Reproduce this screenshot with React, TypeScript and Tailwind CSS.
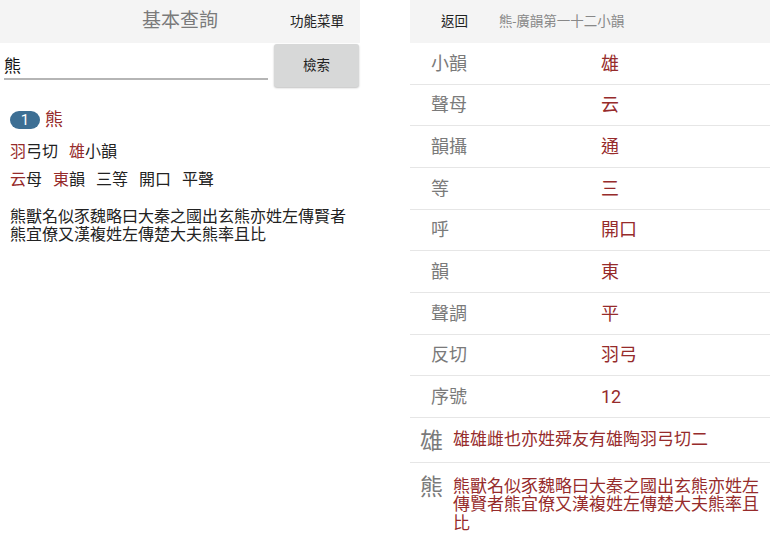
import React from "react";

const rows: [string, string][] = [
  ["小韻", "雄"],
  ["聲母", "云"],
  ["韻攝", "通"],
  ["等", "三"],
  ["呼", "開口"],
  ["韻", "東"],
  ["聲調", "平"],
  ["反切", "羽弓"],
  ["序號", "12"],
];

const red = "text-[#962b2b]";

export default function App() {
  return (
    <div className="flex h-[553px] w-[770px] bg-white font-['Roboto','Noto_Sans_CJK_TC',sans-serif]">
      {/* left: basic search */}
      <div className="w-[360px]">
        <div className="relative flex h-[43px] items-center bg-[#f4f4f4]">
          <div className="w-full text-center text-[19px] text-[#7a7a7a]">基本查詢</div>
          <div className="absolute left-[290px] text-[13.5px] text-[#222]">功能菜單</div>
        </div>
        <div className="flex h-[45px] items-start">
          <div className="ml-[4px] mt-[12px] w-[264px] border-b-2 border-[#b5b5b5] pb-[1px] text-[17px] leading-[22px] text-[#111]">
            熊
          </div>
          <button className="ml-[6px] mt-[1px] h-[43px] w-[85px] rounded-[3px] bg-[#d7d8d8] text-[13.5px] text-[#222] shadow-[0_1px_2px_rgba(0,0,0,0.25)]">
            檢索
          </button>
        </div>
        <div className="px-[10px] pt-[23px] text-[16px] leading-[18px] text-[#222]">
          <div className="flex items-center gap-[5px]">
            <span className="flex h-[18px] w-[30px] items-center justify-center rounded-full bg-[#3d6f94] text-[15px] text-white">
              1
            </span>
            <span className={`text-[18px] ${red}`}>熊</span>
          </div>
          <div className="mt-[14px] flex gap-[11px]">
            <span>
              <span className={red}>羽</span>弓切
            </span>
            <span>
              <span className={red}>雄</span>小韻
            </span>
          </div>
          <div className="mt-[10px] flex gap-[11px]">
            <span>
              <span className={red}>云</span>母
            </span>
            <span>
              <span className={red}>東</span>韻
            </span>
            <span>三等</span>
            <span>開口</span>
            <span>平聲</span>
          </div>
          <p className="mt-[19px]">
            熊獸名似豕魏略曰大秦之國出玄熊亦姓左傳賢者熊宜僚又漢複姓左傳楚大夫熊率且比
          </p>
        </div>
      </div>

      <div className="w-[50px]" />

      {/* right: detail */}
      <div className="flex-1">
        <div className="flex h-[43px] items-center bg-[#f4f4f4] text-[13.5px]">
          <span className="ml-[31px] text-[#222]">返回</span>
          <span className="ml-[31px] text-[#888]">熊-廣韻第一十二小韻</span>
        </div>
        {rows.map(([k, v]) => (
          <div
            key={k}
            className="flex h-[41.67px] items-center border-b border-[#e6e6e6] text-[18px]"
          >
            <span className="ml-[21px] w-[170px] text-[#7a7a7a]">{k}</span>
            <span className={red}>{v}</span>
          </div>
        ))}
        <div className="flex h-[45px] border-b border-[#e6e6e6] pt-[10px]">
          <span className="ml-[10px] w-[33px] text-[23px] leading-[27px] text-[#7a7a7a]">雄</span>
          <span className={`pt-[2px] text-[17px] leading-[19px] ${red}`}>雄雄雌也亦姓舜友有雄陶羽弓切二</span>
        </div>
        <div className="flex pt-[11px]">
          <span className="ml-[10px] w-[33px] shrink-0 text-[23px] leading-[27px] text-[#7a7a7a]">熊</span>
          <span className={`pr-[4px] pt-[3px] text-[17px] leading-[18.5px] ${red}`}>
            熊獸名似豕魏略曰大秦之國出玄熊亦姓左傳賢者熊宜僚又漢複姓左傳楚大夫熊率且比
          </span>
        </div>
      </div>
    </div>
  );
}
